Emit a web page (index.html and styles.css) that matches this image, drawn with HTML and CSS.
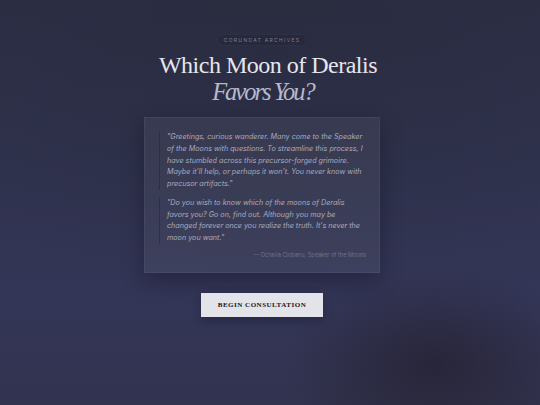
FILE: index.html
```html
<!DOCTYPE html>
<html lang="en">
<head>
<meta charset="utf-8">
<title>Which Moon of Deralis Favors You?</title>
<link rel="stylesheet" href="styles.css">
</head>
<body>
<main class="page">
  <div class="eyebrow">Corundat Archives</div>
  <h1 class="title">Which Moon of Deralis<br><em>Favors You?</em></h1>
  <section class="card">
    <blockquote class="quote">
      <p>"Greetings, curious wanderer. Many come to the Speaker of the Moons with questions. To streamline this process, I have stumbled across this precursor-forged grimoire. Maybe it'll help, or perhaps it won't. You never know with precusor artifacts."</p>
    </blockquote>
    <blockquote class="quote">
      <p>"Do you wish to know which of the moons of Deralis favors you? Go on, find out. Although you may be changed forever once you realize the truth. It's never the moon you want."</p>
    </blockquote>
    <div class="attribution">— Octavia Ciobanu, Speaker of the Moons</div>
  </section>
  <button class="cta" type="button">Begin Consultation</button>
</main>
</body>
</html>
```
FILE: styles.css
```css
html, body {
  margin: 0;
  height: 100%;
}
body {
  background:
    radial-gradient(ellipse 150px 100px at 435px 365px, rgba(32, 28, 40, 0.6), rgba(32, 28, 40, 0) 100%),
    radial-gradient(ellipse 420px 260px at 270px 30px, rgba(40, 42, 60, 0.55), rgba(40, 42, 60, 0) 100%),
    linear-gradient(180deg, #2c2e45 0%, #30334f 45%, #343658 75%, #32334f 100%);
  font-family: "Inter", "Noto Sans", sans-serif;
  overflow: hidden;
}
.page {
  display: flex;
  flex-direction: column;
  align-items: center;
  padding: 34px 16px 0 0;
}
.eyebrow {
  font-size: 5px;
  letter-spacing: 1.3px;
  text-transform: uppercase;
  color: #7b7e94;
  padding: 2px 6px;
  border-radius: 6px;
  background: rgba(0, 0, 0, 0.07);
  border: 1px solid rgba(255, 255, 255, 0.03);
}
.title {
  margin: 7px 0 0;
  padding-left: 12px;
  font-family: "Liberation Serif", "DejaVu Serif", serif;
  font-weight: 400;
  font-size: 24px;
  line-height: 25px;
  text-align: center;
  color: #e6e6ed;
  letter-spacing: -0.5px;
}
.title em {
  display: inline-block;
  margin-top: 1px;
  margin-right: 10px;
  font-size: 24.5px;
  letter-spacing: -2px;
  color: #b6bacc;
}
.card {
  margin-top: 12px;
  width: 207px;
  padding: 13px 13px 13px 14px;
  background: rgba(255, 255, 255, 0.055);
  border: 1px solid rgba(255, 255, 255, 0.05);
  box-shadow: 0 8px 20px rgba(10, 10, 25, 0.35);
}
.quote {
  margin: 0 0 7px;
  padding-left: 7px;
  border-left: 1px solid rgba(20, 20, 30, 0.3);
}
.quote p {
  margin: 0;
  font-style: italic;
  font-size: 7.2px;
  line-height: 11.75px;
  color: #a8abbe;
}
.attribution {
  text-align: right;
  font-size: 5.6px;
  line-height: 8px;
  color: #6f7288;
}
.cta {
  margin-top: 20px;
  width: 122px;
  height: 24px;
  border: 0;
  background: #e3e3ea;
  color: #15151c;
  font-family: "Liberation Serif", serif;
  font-weight: 700;
  font-size: 7px;
  letter-spacing: 0.5px;
  text-transform: uppercase;
  box-shadow: 0 4px 10px rgba(10, 10, 25, 0.3);
}
```
